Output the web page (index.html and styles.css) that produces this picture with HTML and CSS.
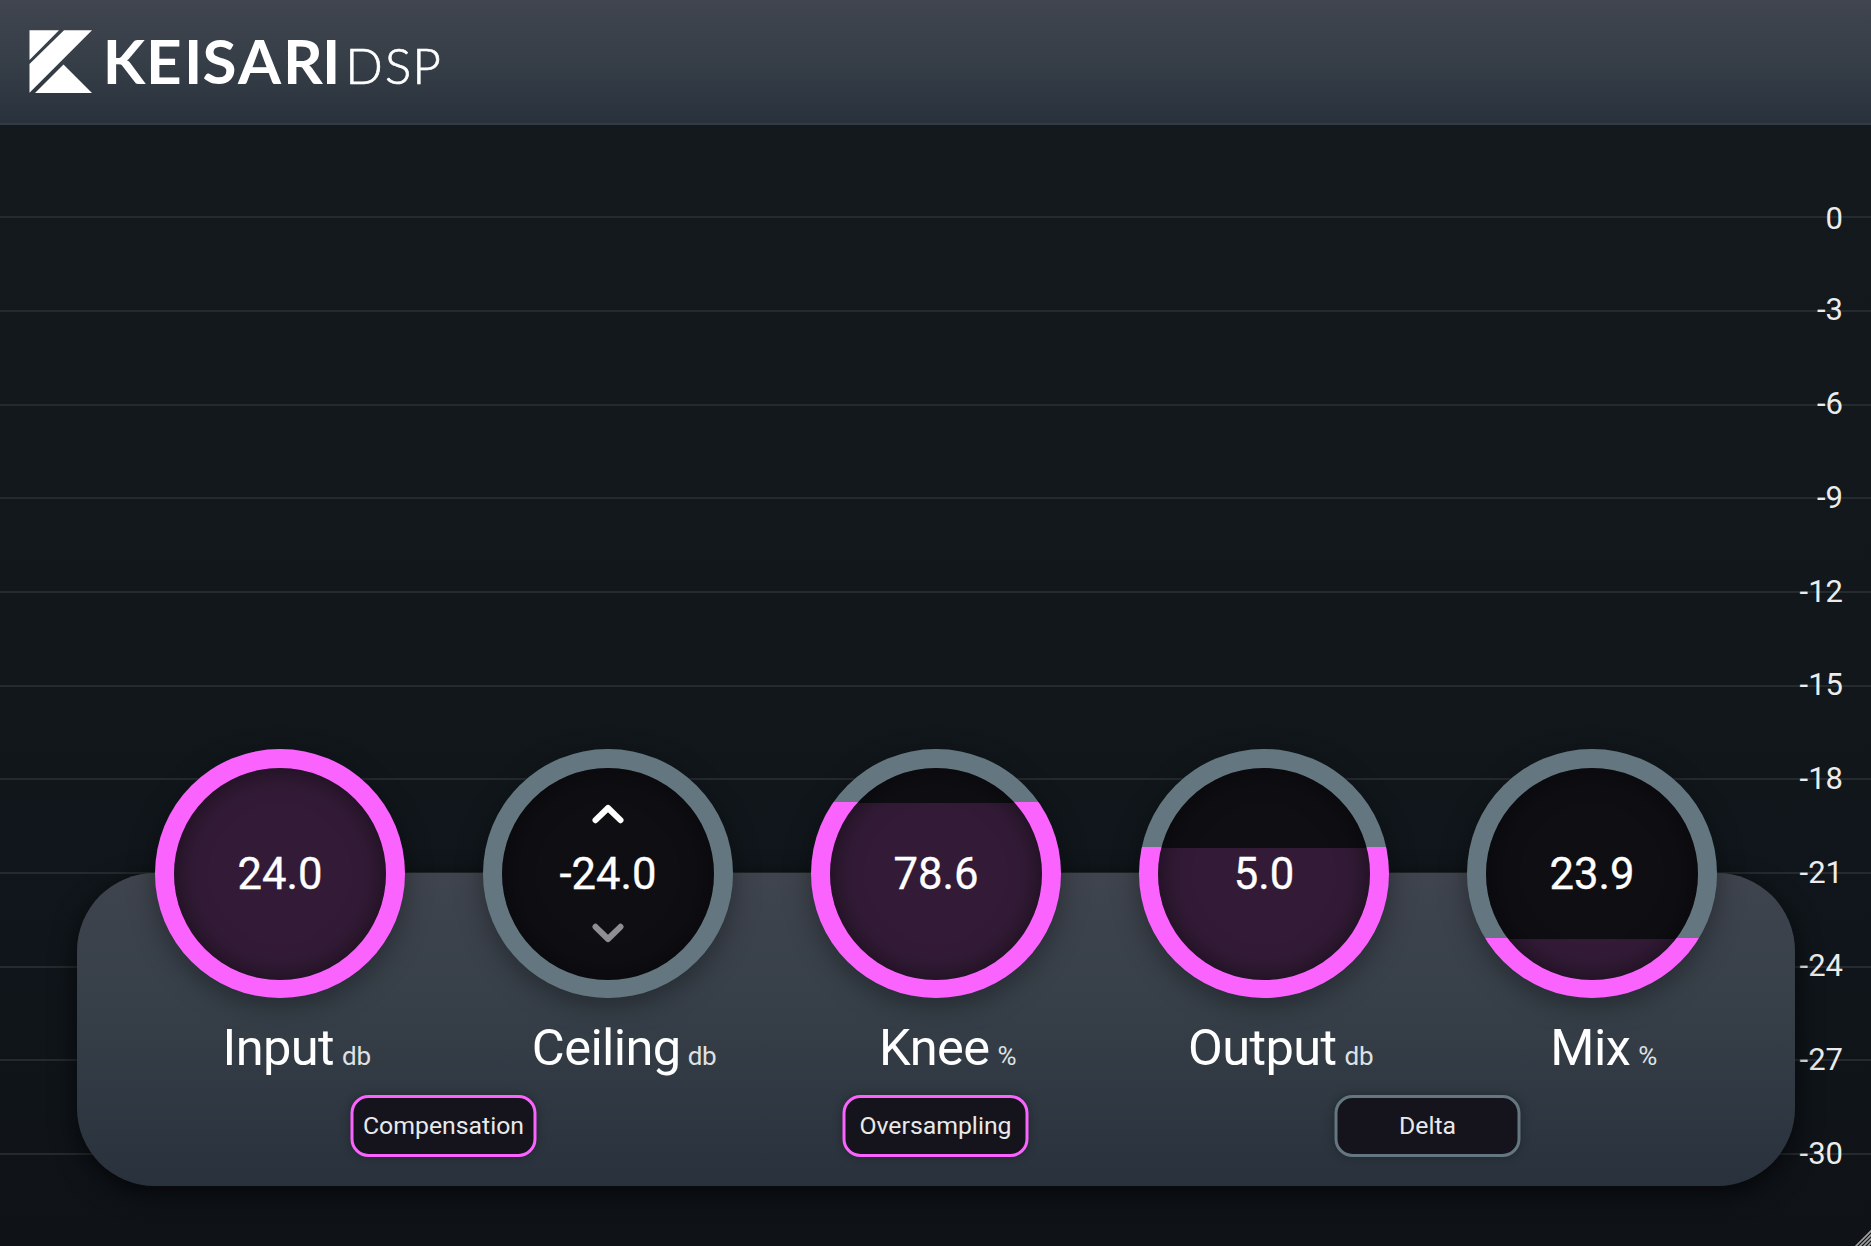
FILE: index.html
```html
<!DOCTYPE html>
<html lang="en">
<head>
<meta charset="utf-8">
<title>Keisari DSP</title>
<link rel="stylesheet" href="styles.css">
</head>
<body>
<div class="plugin">
  <header class="topbar">
    <svg class="logo" width="450" height="122" viewBox="0 0 450 122" role="img" aria-label="Keisari DSP">
      <path fill="#fff" d="M29.5 30.3H59L29.5 60ZM64 30.3H92L29.5 92.7V64ZM63.5 64.5L92 93H35Z"/>
      <text class="brand" y="83.8" x="102.8 146 184 202.500 238 283 322">KEISARI</text>
      <text class="brand-light" y="83.8" x="345.5 385 412.500">DSP</text>
    </svg>
  </header>
  <main class="stage">
    <div class="scale">
      <div class="tick"><span class="tick-label tick-zero">0</span></div>
      <div class="tick"><span class="tick-label">-3</span></div>
      <div class="tick"><span class="tick-label">-6</span></div>
      <div class="tick"><span class="tick-label">-9</span></div>
      <div class="tick"><span class="tick-label">-12</span></div>
      <div class="tick"><span class="tick-label">-15</span></div>
      <div class="tick"><span class="tick-label">-18</span></div>
      <div class="tick"><span class="tick-label">-21</span></div>
      <div class="tick"><span class="tick-label">-24</span></div>
      <div class="tick"><span class="tick-label">-27</span></div>
      <div class="tick"><span class="tick-label">-30</span></div>
    </div>
    <section class="panel">
      <div class="knobs">
        <div class="control">
          <div class="knob" style="--level:100%"><div class="dial"><span class="value">24.0</span></div></div>
          <div class="name">Input<span class="unit">db</span></div>
        </div>
        <div class="control">
          <div class="knob" style="--level:0%"><div class="dial">
            <svg class="chevron" width="32" height="20" viewBox="0 0 32 20"><path d="M3.500 16.200L16 4L28.500 16.200"/></svg>
            <span class="value">-24.0</span>
            <svg class="chevron dim" width="32" height="20" viewBox="0 0 32 20"><path d="M3.500 3.800L16 16L28.500 3.800"/></svg>
          </div></div>
          <div class="name">Ceiling<span class="unit tight">db</span></div>
        </div>
        <div class="control">
          <div class="knob" style="--level:78.6%"><div class="dial"><span class="value">78.6</span></div></div>
          <div class="name">Knee<span class="unit">%</span></div>
        </div>
        <div class="control">
          <div class="knob" style="--level:60.6%"><div class="dial"><span class="value">5.0</span></div></div>
          <div class="name">Output<span class="unit">db</span></div>
        </div>
        <div class="control">
          <div class="knob" style="--level:24.1%"><div class="dial"><span class="value">23.9</span></div></div>
          <div class="name">Mix<span class="unit">%</span></div>
        </div>
      </div>
      <div class="switches">
        <button class="switch on">Compensation</button>
        <button class="switch on">Oversampling</button>
        <button class="switch">Delta</button>
      </div>
    </section>
    <svg class="grip" width="18" height="18" viewBox="0 0 18 18"><path d="M2 19L19 2M6 19L19 6M10 19L19 10M14 19L19 14"/></svg>
  </main>
</div>
</body>
</html>
```
FILE: styles.css
```css
* { box-sizing: border-box; }
body { margin: 0; background: #0f1418; font-family: Roboto, "Liberation Sans", sans-serif; color: #fff; }
.plugin { width: 1871px; height: 1246px; display: flex; flex-direction: column; overflow: hidden; }
.topbar { height: 125px; flex: none; background: linear-gradient(#40454f, #363e48 50%, #29323c); border-bottom: 2px solid #323b45; }
.logo { display: block; }
.brand { font: 700 62px Lato, sans-serif; fill: #fff; }
.brand-light { font: 300 49px Lato, sans-serif; fill: #fff; stroke: #fff; stroke-width: .7px; }
.stage { flex: 1; display: grid; grid-template: 100% / 100%; position: relative; background: linear-gradient(#14191d, #11171a 45%, #0f151a 75%, #0f1318); }
.scale { grid-area: 1 / 1; display: flex; flex-direction: column; margin-top: -.4px; }
.tick { height: 93.7px; flex: none; display: flex; align-items: flex-end; justify-content: flex-end; padding-right: 28px; border-bottom: 2px solid #252a2e; }
.tick-label { font-size: 31px; line-height: 36px; margin-bottom: -18.5px; color: #ececec; }
.tick-zero { margin-bottom: -20.5px; }
.panel { grid-area: 1 / 1; align-self: start; margin: 748px 76px 0 77px; height: 312.500px; padding: 0 39px; border-radius: 78px; background: linear-gradient(#3f444e, #363f48 45%, #29323c); box-shadow: 0 8px 26px rgba(0,0,0,.65); }
.knobs { display: grid; grid-template-columns: repeat(5, 328px); margin-top: -124px; }
.control { display: flex; flex-direction: column; align-items: center; }
.knob { width: 249.300px; height: 249.300px; padding: 18.700px; border-radius: 50%; background: linear-gradient(to top, #fb63ff var(--level), #647780 var(--level)); box-shadow: 0 8px 28px rgba(0,0,0,.35); }
.dial { width: 100%; height: 100%; border-radius: 50%; display: flex; flex-direction: column; align-items: center; justify-content: center; gap: 23px; background: linear-gradient(to top, #331b37 calc((var(--level) * 249.3 - 18.7 * 100%) / 211.9), #0f0e13 calc((var(--level) * 249.3 - 18.7 * 100%) / 211.9)); box-shadow: inset 0 0 28px rgba(0,0,0,.55); }
.value { font-size: 43.600px; line-height: 51px; margin-top: 2.6px; -webkit-text-stroke: .35px #fff; }
.chevron { fill: none; stroke: #fff; stroke-width: 6; stroke-linecap: round; stroke-linejoin: round; }
.chevron.dim { stroke: #8f8e91; }
.name { font-size: 50.600px; letter-spacing: -.6px; line-height: 60px; margin-top: 19.5px; padding-right: 3.5px; white-space: nowrap; }
.unit { display: inline-block; width: 0; font-size: 26px; letter-spacing: -.2px; color: #dfe1e3; text-indent: 8px; }
.unit.tight { text-indent: 7px; }
.switches { display: flex; justify-content: space-between; width: 1170px; margin: 9px auto 0; transform: translateX(-.5px); }
.switch { width: 186px; height: 62px; padding: 0; border: 3px solid #647780; border-radius: 18px; background: #15141d; color: #e9e9ea; font: 24.8px Roboto, sans-serif; box-shadow: 0 0 10px rgba(0,0,0,.3); }
.switch.on { border-color: #fb63ff; }
.grip { position: absolute; right: 0; bottom: 0; fill: none; stroke: #a0a0a0; stroke-width: 1.600; }
```
